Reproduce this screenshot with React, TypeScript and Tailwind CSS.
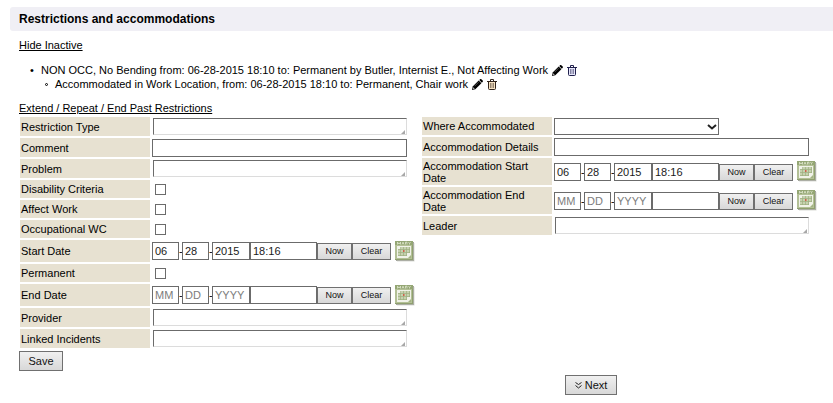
import React from "react";

const FIELD = "border border-[#6b6b6b] bg-white text-[11px] leading-4 text-[#1a1a1a] outline-none";
const BUTTON =
  "border border-[#707070] bg-gradient-to-b from-[#f0f0f0] to-[#d8d8d8] text-[#111]";

function PencilIcon() {
  return (
    <svg viewBox="0 0 11 11" className="h-[11px] w-[11px]" aria-hidden="true">
      <path d="M7.300 1 8.300 0Q9 -.2 9.600 .4L10.700 1.500Q11.200 2.200 10.700 2.800L9.800 3.700Z" fill="#000" />
      <path d="M6.700 1.500 9.400 4.300 3.300 10.300 0 11 .7 7.600Z" fill="#000" />
      <path d="M1.400 8.600v1h1" fill="none" stroke="#fff" strokeWidth=".8" />
      <path d="M2.600 7.200 6.600 3.200" stroke="#999" strokeWidth=".5" />
    </svg>
  );
}

function TrashIcon({ fill, stroke }: { fill: string; stroke: string }) {
  return (
    <svg viewBox="0 0 10 11" className="h-[11px] w-[10px]" fill="none" aria-hidden="true">
      <path d="M1.500 2.500h7v7q0 1-1 1h-5q-1 0-1-1z" fill={fill} stroke={stroke} />
      <path d="M0 2.500h10M3.500 2V.5h3V2" stroke={stroke} />
      <path d="M3.500 4v5M5 4v5M6.500 4v5" stroke={stroke} strokeWidth=".5" />
    </svg>
  );
}

function CalendarIcon() {
  return (
    <svg viewBox="0 0 20 21" className="h-[21px] w-5" aria-hidden="true">
      <path d="M1 1h18v19H1z" fill="#a3a59c" />
      <path d="M2 2h17.500v18.500H2z" fill="#b5b7ae" opacity=".5" />
      <path d="M0 0h18v19H0z" fill="#b3c096" />
      <path d="M0 0h18v4H0z" fill="#94a674" />
      <path d="M0 18h18v1H0zM17 4h1v14h-1z" fill="#8fa06f" />
      <path
        d="M2.500 3.500V1.200L4 3l1.500-1.800v2.300M7 3.500l1-2.300 1 2.300M10.500 3.500V1.200h1.500v2.300M13.500 1.200l1 1.200 1-1.200M14.500 2.400v1.100"
        fill="none"
        stroke="#eef3e0"
        strokeWidth=".7"
      />
      <path d="M2 5h14v12H2z" fill="#f0f2e8" />
      <path d="M6 6h9v6h-3v3H3V8h3z" fill="#c6d2b0" />
      <path
        d="M3 8.500h12M3 11.500h12M3 14.500h9M5.500 6v9M8.500 6v9M11.500 6v9M14.500 6v6"
        stroke="#9daf80"
        strokeWidth=".7"
      />
      <path d="M8 9h1.500v2H8z" fill="#d0614c" />
      <path d="M13 17h3v-3z" fill="#a3b384" />
    </svg>
  );
}

function Row({
  label,
  htmlFor,
  height,
  children,
}: {
  label: string;
  htmlFor: string;
  height: string;
  children: React.ReactNode;
}) {
  return (
    <div className={`flex gap-[2px] ${height}`}>
      <label
        htmlFor={htmlFor}
        className="flex w-[130px] shrink-0 items-center bg-[#e7e1d1] pr-2 pl-px leading-3"
      >
        {label}
      </label>
      <div className="flex min-w-0 flex-1 items-center">{children}</div>
    </div>
  );
}

function AreaField({ id }: { id: string }) {
  return (
    <div className="relative ml-px h-[17px] w-[254px]">
      <textarea
        id={id}
        rows={1}
        className="block h-full w-full resize-none overflow-hidden border border-t-[#6b6b6b] border-r-[#dcdcdc] border-b-[#dcdcdc] border-l-[#6b6b6b] bg-white px-1 text-[11px] leading-[15px] outline-none"
      />
      <svg viewBox="0 0 4 4" className="absolute right-[2px] bottom-px h-1 w-1" aria-hidden="true">
        <path d="M4 0v4H0z" fill="#a8a8a8" />
      </svg>
    </div>
  );
}

function CheckField({ id }: { id: string }) {
  return (
    <input
      id={id}
      type="checkbox"
      className="ml-[3px] h-[11px] w-[11px] appearance-none border border-[#6b6b6b] bg-white checked:bg-[#6b6b6b]"
    />
  );
}

function DateField({ id, name, filled }: { id: string; name: string; filled?: boolean }) {
  const part = `${FIELD} h-[18px] pl-[2px] placeholder:text-[#7c7c7c]`;
  return (
    <div className="flex items-center">
      <div className="flex items-end">
        <input id={id} aria-label={`${name} month`} placeholder="MM" defaultValue={filled ? "06" : ""} className={`${part} w-[27px]`} />
        <span className="w-[3px] overflow-hidden text-center leading-[18px]">-</span>
        <input aria-label={`${name} day`} placeholder="DD" defaultValue={filled ? "28" : ""} className={`${part} w-[27px]`} />
        <span className="w-[3px] overflow-hidden text-center leading-[18px]">-</span>
        <input aria-label={`${name} year`} placeholder="YYYY" defaultValue={filled ? "2015" : ""} className={`${part} w-[38px]`} />
        <input aria-label={`${name} time`} defaultValue={filled ? "18:16" : ""} className={`${part} w-[67px]`} />
        <button type="button" className={`${BUTTON} h-[17px] w-[35px] text-[9px] leading-[15px]`}>
          Now
        </button>
        <button type="button" className={`${BUTTON} h-[17px] w-[39px] text-[9px] leading-[15px]`}>
          Clear
        </button>
      </div>
      <button type="button" aria-label={`Pick ${name}`} className="ml-1">
        <CalendarIcon />
      </button>
    </div>
  );
}

export default function App() {
  return (
    <main className="min-w-[820px] bg-white pt-[7px] pl-[10px] font-['Liberation_Sans',Arial,sans-serif] text-[11px] leading-[14px] text-black">
      <h1 className="rounded-l-[3px] bg-[#f0eff5] pl-[9px] text-[12px] leading-6 font-bold">
        Restrictions and accommodations
      </h1>
      <div className="pl-[9px]">
        <a href="#inactive" className="mt-[7px] block w-fit underline">
          Hide Inactive
        </a>
        <ul className="mt-[11px]">
          <li>
            <div className="flex items-center">
              <span className="w-[22px] pl-[11px] leading-[14px]">•</span>
              <span>
                NON OCC, No Bending from: 06-28-2015 18:10 to: Permanent by Butler, Internist E., Not Affecting Work
              </span>
              <button type="button" aria-label="Edit restriction" className="ml-1">
                <PencilIcon />
              </button>
              <button type="button" aria-label="Delete restriction" className="ml-1">
                <TrashIcon fill="#e6e6fa" stroke="#20204c" />
              </button>
            </div>
            <ul>
              <li className="flex items-center">
                <span className="flex w-9 pl-[26px]">
                  <span className="h-[3px] w-[3px] rounded-full border border-black" />
                </span>
                <span>Accommodated in Work Location, from: 06-28-2015 18:10 to: Permanent, Chair work</span>
                <button type="button" aria-label="Edit accommodation" className="ml-1">
                  <PencilIcon />
                </button>
                <button type="button" aria-label="Delete accommodation" className="ml-1">
                  <TrashIcon fill="#f8e4c4" stroke="#30241c" />
                </button>
              </li>
            </ul>
          </li>
        </ul>
        <a href="#past" className="mt-[10px] block w-fit underline">
          Extend / Repeat / End Past Restrictions
        </a>
        <form onSubmit={(e) => e.preventDefault()}>
          <div className="mt-[2px] flex items-start gap-[7px] pl-px">
            <div className="flex w-[395px] shrink-0 flex-col gap-[2px]">
              <Row label="Restriction Type" htmlFor="type" height="h-[19px]"><AreaField id="type" /></Row>
              <Row label="Comment" htmlFor="comment" height="h-[19px]">
                <input id="comment" className={`${FIELD} h-[18px] w-[255px] px-1`} />
              </Row>
              <Row label="Problem" htmlFor="problem" height="h-[19px]"><AreaField id="problem" /></Row>
              <Row label="Disability Criteria" htmlFor="disability" height="h-[18px]"><CheckField id="disability" /></Row>
              <Row label="Affect Work" htmlFor="affect" height="h-[18px]"><CheckField id="affect" /></Row>
              <Row label="Occupational WC" htmlFor="wc" height="h-[18px]"><CheckField id="wc" /></Row>
              <Row label="Start Date" htmlFor="start" height="h-[22px]"><DateField id="start" name="Start date" filled /></Row>
              <Row label="Permanent" htmlFor="permanent" height="h-[18px]"><CheckField id="permanent" /></Row>
              <Row label="End Date" htmlFor="end" height="h-[22px]"><DateField id="end" name="End date" /></Row>
              <Row label="Provider" htmlFor="provider" height="h-[19px]"><AreaField id="provider" /></Row>
              <Row label="Linked Incidents" htmlFor="incidents" height="h-[19px]"><AreaField id="incidents" /></Row>
            </div>
            <div className="flex min-w-[396px] flex-1 flex-col gap-[2px]">
              <Row label="Where Accommodated" htmlFor="where" height="h-[18px]">
                <div className="relative">
                  <select id="where" className={`${FIELD} block h-[17px] w-[165px] appearance-none px-1`}>
                    <option value=""></option>
                  </select>
                  <svg viewBox="0 0 10 6" className="pointer-events-none absolute top-[6px] right-[2px] h-[6px] w-[10px]" aria-hidden="true">
                    <path d="m1 1 4 3.500L9 1" fill="none" stroke="#222" strokeWidth="2" />
                  </svg>
                </div>
              </Row>
              <Row label="Accommodation Details" htmlFor="details" height="h-[19px]">
                <input id="details" className={`${FIELD} h-[18px] w-[255px] px-1`} />
              </Row>
              <Row label="Accommodation Start Date" htmlFor="acc-start" height="h-[27px]">
                <DateField id="acc-start" name="Accommodation start date" filled />
              </Row>
              <Row label="Accommodation End Date" htmlFor="acc-end" height="h-[27px]">
                <DateField id="acc-end" name="Accommodation end date" />
              </Row>
              <Row label="Leader" htmlFor="leader" height="h-[19px]"><AreaField id="leader" /></Row>
            </div>
          </div>
          <button type="submit" className={`${BUTTON} mt-[3px] block h-5 w-11 leading-4`}>
            Save
          </button>
          <button type="button" className={`${BUTTON} mt-1 ml-[546px] flex h-5 w-[52px] items-center justify-center gap-[3px] leading-4`}>
            <svg viewBox="0 0 7 7" className="h-[7px] w-[7px]" fill="none" stroke="#222" aria-hidden="true">
              <path d="m.5.500 3 2 3-2M.5 3.500l3 2.500 3-2.500" />
            </svg>
            Next
          </button>
        </form>
      </div>
    </main>
  );
}
